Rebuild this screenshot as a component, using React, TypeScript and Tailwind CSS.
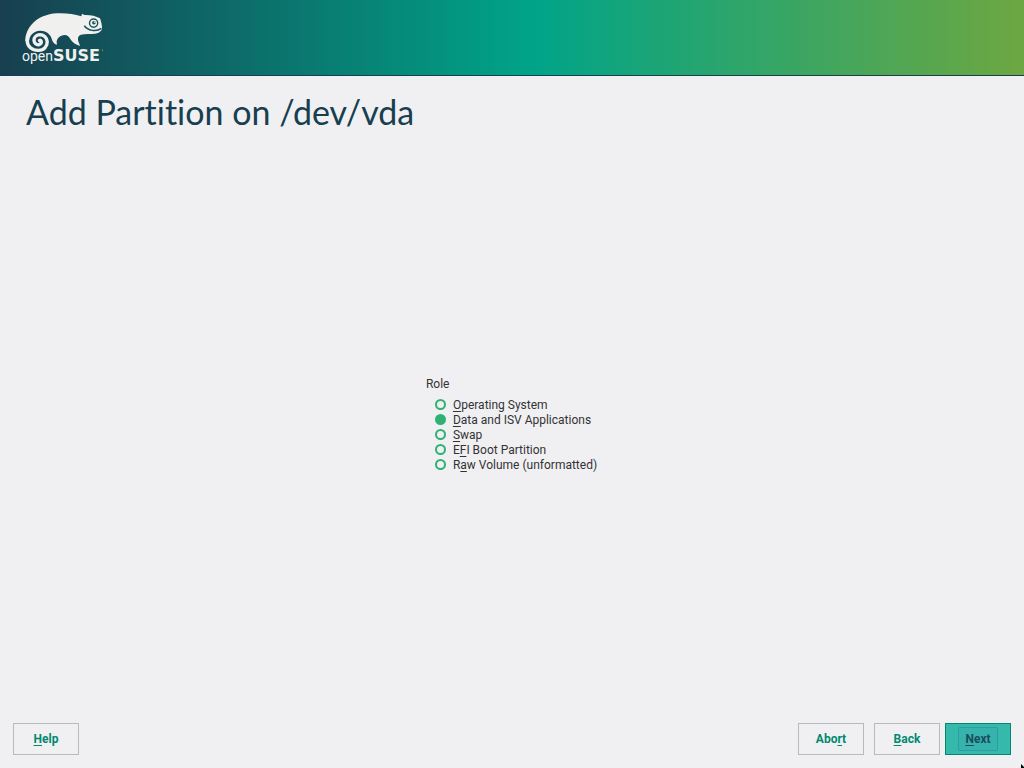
import { useState, type ReactNode } from "react";

function Key({ children }: { children: ReactNode }) {
  return (
    <span className="underline decoration-1 underline-offset-2 [text-decoration-skip-ink:none]">
      {children}
    </span>
  );
}

function Logo() {
  return (
    <svg viewBox="0 0 84 56" className="h-14 w-[84px]" role="img" aria-label="openSUSE">
      <g transform="translate(-21 -10)">
        <path
          fill="#f0f0ee"
          d="M25.3 41C25.5 28 36 14.5 57 13.3C66 12.9 74 14 81.3 16.2L82 13.8L84.5 15C90 14.8 96 16 100 18.3C101 21 102 25 102.1 28.5C101.5 31.5 98.5 33.2 95 33.7C90 34.5 85.5 33.5 81 34.8C78.6 35.6 77.6 37.5 78 40C78.3 42 79.4 43.6 80 46C75.5 44.6 73 42.9 70.6 39.6C69 36.5 67.5 35.2 64.5 35.1C61 35.2 58.2 37.5 57 40C56.2 42 57 43.4 57 44.8C53.8 44.2 52.5 41.6 51.5 38.2C50 33.8 45.3 30.6 40 30.8C33.5 31.2 29.5 35.5 29.3 40.5Z"
        />
        <path
          fill="none"
          stroke="#f0f0ee"
          strokeWidth="3.4"
          strokeLinecap="round"
          d="M27.2 40.5C27.2 46.5 32 50.6 38.5 50.4C44.2 50.2 47.5 46 47.2 41.6C46.9 37.4 43.5 34.6 39.5 34.8C36 35 33.9 37.6 34 40.3C34.2 43.3 36.4 45 38.8 44.7C40.8 44.4 41.7 42.8 41.2 41.2C40.8 40.4 40 40.2 39.4 40.5"
        />
        <circle cx="93.6" cy="23.1" r="4.1" fill="none" stroke="#17525b" strokeWidth="1.4" />
        <circle cx="93.9" cy="22.8" r="1.8" fill="#17525b" />
        <ellipse cx="94.7" cy="22.2" rx="1" ry="0.6" fill="#f0f0ee" />
        <path fill="none" stroke="#17525b" strokeWidth="1.5" d="M84.3 25.7C87.5 30.9 96.5 32.1 101.4 28.3" />
        <text x="22" y="61" fill="#f0f0ee" fontSize="14" className="font-[Roboto,sans-serif]">
          open
        </text>
        <text x="53" y="61" fill="#f0f0ee" fontSize="16" fontWeight="700" className="font-['DejaVu_Sans',sans-serif]">
          SUSE
        </text>
        <circle cx="102.5" cy="50" r="0.6" fill="#a9c0c2" />
      </g>
    </svg>
  );
}

const roles: { id: string; before: string; key: string; after: string }[] = [
  { id: "system", before: "", key: "O", after: "perating System" },
  { id: "data", before: "", key: "D", after: "ata and ISV Applications" },
  { id: "swap", before: "", key: "S", after: "wap" },
  { id: "efi", before: "E", key: "F", after: "I Boot Partition" },
  { id: "raw", before: "R", key: "a", after: "w Volume (unformatted)" },
];

const plainButton =
  "h-8 w-[66px] border border-[#b9babc] bg-[#f0f0f3] text-xs font-bold text-[#00896f]";

export default function App() {
  const [role, setRole] = useState("data");

  return (
    <div className="relative flex min-h-screen flex-col overflow-hidden bg-[#f0f0f3] font-[Roboto,sans-serif] text-xs text-[#333333]">
      <header className="border-b border-[#173f4f] bg-[linear-gradient(to_right,#173f4f_0%,#00a489_52%,#6da741_100%)]">
        <div className="flex h-[75px] items-start px-[21px] pt-[10px]">
          <Logo />
        </div>
      </header>

      <h1 className="px-[26px] pt-3.5 pb-0.5 font-[Lato,sans-serif] text-[34px] leading-11 font-normal text-[#173f4f] [font-variant-ligatures:none]">
        Add Partition on /dev/vda
      </h1>

      <main className="flex grow items-center justify-center pr-px pb-3">
        <fieldset>
          <legend className="leading-4">Role</legend>
          <div className="flex flex-col pt-[5px] pl-[9px]">
            {roles.map((r) => (
              <label key={r.id} className="flex h-[15px] items-center gap-[7px] leading-[15px] whitespace-nowrap">
                <input
                  type="radio"
                  name="role"
                  checked={role === r.id}
                  onChange={() => setRole(r.id)}
                  className="size-[11px] appearance-none rounded-full border-2 border-[#2db273] checked:bg-[#2db273]"
                />
                <span className="pt-0.5">
                  {r.before}
                  <Key>{r.key}</Key>
                  {r.after}
                </span>
              </label>
            ))}
          </div>
        </fieldset>
      </main>

      <footer className="flex items-center justify-between p-[13px] pt-0">
        <button type="button" className={plainButton}>
          <Key>H</Key>elp
        </button>
        <div className="flex gap-[5px]">
          <div className="flex gap-[10px]">
            <button type="button" className={plainButton}>
              Abo<Key>r</Key>t
            </button>
            <button type="button" className={plainButton}>
              <Key>B</Key>ack
            </button>
          </div>
          <button
            type="button"
            className="flex h-8 w-[66px] items-center justify-center border border-[#00896f] bg-[#35b9ab] text-xs font-bold text-[#1b4c5d]"
          >
            <span className="flex h-6 w-10 items-center justify-center rounded-xs border border-[#2c9ea4] bg-[#37b3ad]">
              <span>
                <Key>N</Key>ext
              </span>
            </span>
          </button>
        </div>
      </footer>

      <svg viewBox="0 0 3 4" className="absolute right-0 bottom-0 h-1 w-[3px]" aria-hidden="true">
        <path d="M0 0L3 3V4H0Z" fill="#000000" />
      </svg>
    </div>
  );
}
